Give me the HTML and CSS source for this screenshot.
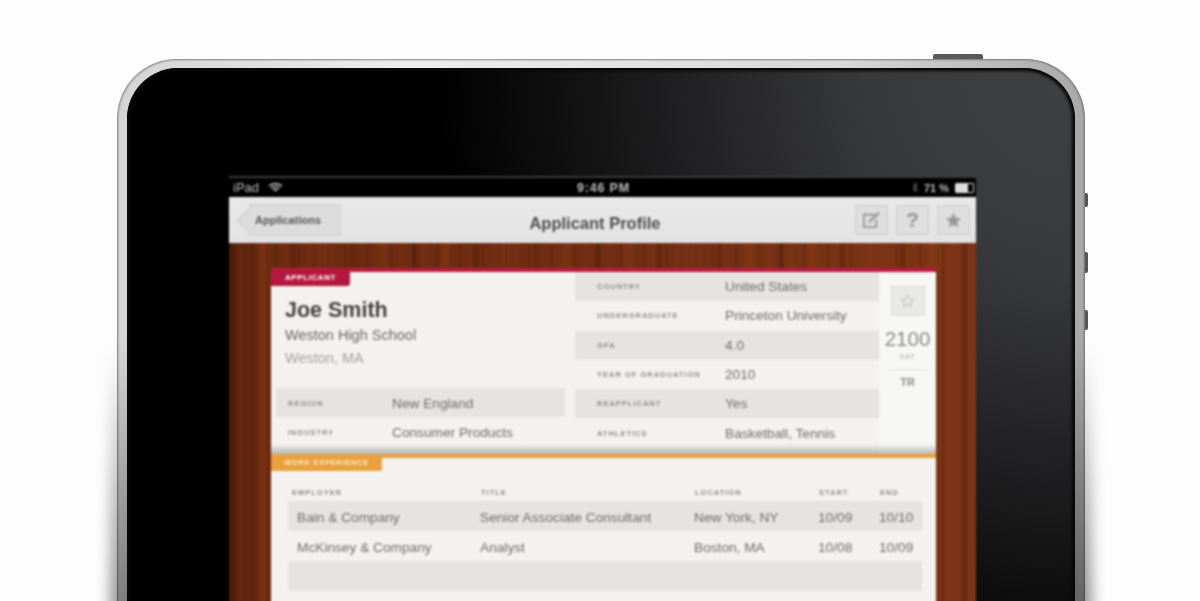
FILE: index.html
```html
<!DOCTYPE html>
<html lang="en">
<head>
  <meta charset="utf-8"/>
  <title>Applicant Profile</title>
  <link rel="stylesheet" href="styles.css">
</head>
<body>
  <div class="ipad">
    <span class="btn-top"></span>
    <span class="btn-side btn-lock"></span>
    <span class="btn-side btn-vol"></span>
    <span class="btn-side btn-vol2"></span>
    <div class="bezel">
      <div class="screen">

        <!-- status bar -->
        <div class="status">
          <div class="status-left">
            <span>iPad</span>
            <svg width="15" height="11" viewBox="0 0 15 11" fill="none" stroke="#ccc" stroke-width="1.5"><path d="M1 4c3.5-3 9.500-3 13 0M3.300 6.300c2.400-2 6-2 8.400 0M5.600 8.400c1-.8 2.800-.8 3.800 0"/></svg>
          </div>
          <div class="status-time">9:46 PM</div>
          <div class="status-right">
            <svg width="6" height="11" viewBox="0 0 6 11" fill="none" stroke="#666" stroke-width="1"><path d="M1 3l4 5-2 2V1l2 2-4 5"/></svg>
            <span>71 %</span>
            <span class="battery"><span class="battery-fill"></span></span>
          </div>
        </div>

        <!-- nav bar -->
        <div class="navbar">
          <a class="back"><span class="back-text">Applications</span></a>
          <div class="nav-title">Applicant Profile</div>
          <div class="nav-actions">
            <span class="nav-btn">
              <svg width="21" height="19" viewBox="0 0 22 20" fill="none" stroke="#999" stroke-width="2"><path d="M15 4H3v13h13V9"/><path d="M8 12l11-10" stroke-width="2.4"/></svg>
            </span>
            <span class="nav-btn nav-help">?</span>
            <span class="nav-btn">
              <svg width="17" height="16" viewBox="0 0 20 19" fill="#999"><path d="M10 1l2.700 5.900 6.300.7-4.700 4.300 1.300 6.300L10 15.100l-5.600 3.100 1.300-6.300L1 7.600l6.300-.7z"/></svg>
            </span>
          </div>
        </div>

        <div class="wood">
          <div class="card">

            <section class="applicant">
              <span class="tag tag-red">APPLICANT</span>
              <div class="applicant-body">
                <div class="col-left">
                  <div class="who">
                    <h1>Joe Smith</h1>
                    <p class="school">Weston High School</p>
                    <p class="town">Weston, MA</p>
                  </div>
                  <div class="row shaded"><span class="lbl">REGION</span><span class="val">New England</span></div>
                  <div class="row"><span class="lbl">INDUSTRY</span><span class="val">Consumer Products</span></div>
                </div>
                <div class="col-mid">
                  <div class="row shaded"><span class="lbl">COUNTRY</span><span class="val">United States</span></div>
                  <div class="row"><span class="lbl">UNDERGRADUATE</span><span class="val">Princeton University</span></div>
                  <div class="row shaded"><span class="lbl">GPA</span><span class="val">4.0</span></div>
                  <div class="row"><span class="lbl">YEAR OF GRADUATION</span><span class="val">2010</span></div>
                  <div class="row shaded"><span class="lbl">REAPPLICANT</span><span class="val">Yes</span></div>
                  <div class="row"><span class="lbl">ATHLETICS</span><span class="val">Basketball, Tennis</span></div>
                </div>
                <div class="col-score">
                  <span class="star-btn">
                    <svg width="15" height="14" viewBox="0 0 20 19" fill="none" stroke="#c4c4c0" stroke-width="1.4"><path d="M10 1.500l2.500 5.400 5.800.7-4.300 4 1.200 5.800L10 14.500l-5.200 2.900L6 11.600l-4.300-4 5.800-.7z"/></svg>
                  </span>
                  <div class="score">2100</div>
                  <div class="score-lbl">SAT</div>
                  <div class="score-tr">TR</div>
                </div>
              </div>
            </section>

            <section class="work">
              <span class="tag tag-orange">WORK EXPERIENCE</span>
              <div class="work-table">
                <div class="work-head">
                  <span class="c1">EMPLOYER</span><span class="c2">TITLE</span><span class="c3">LOCATION</span><span class="c4">START</span><span class="c5">END</span>
                </div>
                <div class="work-row shaded">
                  <span class="c1">Bain &amp; Company</span><span class="c2">Senior Associate Consultant</span><span class="c3">New York, NY</span><span class="c4">10/09</span><span class="c5">10/10</span>
                </div>
                <div class="work-row">
                  <span class="c1">McKinsey &amp; Company</span><span class="c2">Analyst</span><span class="c3">Boston, MA</span><span class="c4">10/08</span><span class="c5">10/09</span>
                </div>
                <div class="work-row shaded"></div>
              </div>
            </section>

          </div>
        </div>
      </div>
    </div>
  </div>
</body>
</html>
```

FILE: styles.css
```css
html, body {
  margin: 0;
  height: 601px;
  overflow: hidden;
}
body {
  font-family: "Liberation Sans", Arial, sans-serif;
  background: #fdfdfd;
  padding-top: 59px;
  box-sizing: border-box;
}

/* device */
.ipad {
  position: relative;
  z-index: 0;
  width: 968px;
  height: 560px;
  margin-left: 117px;
  box-sizing: border-box;
  padding: 9px 10px 0 10px;
  border-radius: 60px 60px 0 0;
  background: linear-gradient(90deg, #d4d4d4 0, #eeeeee 30%, #d8d8d8 75%, #a8a8a8 100%);
  box-shadow: inset 0 0 2px 1px rgba(90,90,90,0.7);
}
.ipad:before {
  content: "";
  position: absolute;
  z-index: -1;
  left: -7px;
  right: -7px;
  top: 285px;
  height: 320px;
  background: linear-gradient(rgba(0,0,0,0), rgba(0,0,0,0.25) 45%, rgba(0,0,0,0.5));
  filter: blur(7px);
}
.bezel {
  height: 100%;
  box-sizing: border-box;
  padding: 108px 99px 0 102px;
  border-radius: 51px 51px 0 0;
  box-shadow: inset 0 0 3px 3px #080808;
  background:
    radial-gradient(ellipse 640px 640px at 100% 0, #3f4042 0, #38393b 32%, #262628 55%, #121213 78%, #000 100%);
}
.btn-top {
  position: absolute;
  top: -5px;
  left: 816px;
  width: 50px;
  height: 5px;
  border-radius: 2px 2px 0 0;
  background: #5a5a5a;
}
.btn-side {
  position: absolute;
  right: -3px;
  width: 3px;
  background: #555;
  border-radius: 0 2px 2px 0;
}
.btn-lock { top: 134px; height: 14px; }
.btn-vol { top: 193px; height: 21px; }
.btn-vol2 { top: 251px; height: 20px; }

/* screen */
.screen {
  filter: blur(0.8px);
  width: 747px;
}
.status {
  height: 19px;
  background: #000;
  border-top: 2px solid #3a3a3a;
  display: flex;
  align-items: center;
  justify-content: space-between;
  color: #bdbdbd;
  font-size: 13px;
  padding: 0 2px 0 4px;
}
.status-left, .status-right {
  display: flex;
  align-items: center;
  gap: 6px;
  width: 200px;
}
.status-left {
  gap: 9px;
}
.status-right {
  justify-content: flex-end;
  font-size: 11px;
  font-weight: bold;
}
.status-time {
  font-weight: bold;
  font-size: 12.5px;
  letter-spacing: 0.8px;
}
.battery {
  width: 17px;
  height: 8px;
  border: 1px solid #ddd;
  border-radius: 1px;
  display: block;
}
.battery-fill {
  display: block;
  width: 12px;
  height: 8px;
  background: #ddd;
}
.navbar {
  height: 46px;
  background: linear-gradient(#e9e9e9, #e3e3e3);
  display: flex;
  align-items: center;
  position: relative;
  box-sizing: border-box;
  padding: 0 6px 0 20px;
  justify-content: space-between;
}
.back {
  height: 32px;
  width: 92px;
  background: #dcdcdc;
  border: 1px solid #cfcfcf;
  border-left: 0;
  border-radius: 0 3px 3px 0;
  position: relative;
  box-sizing: border-box;
  font-size: 11px;
  font-weight: bold;
  color: #555;
  line-height: 30px;
  padding-left: 6px;
}
.back:before {
  content: "";
  position: absolute;
  left: -8px;
  top: 4px;
  width: 22px;
  height: 22px;
  background: #dcdcdc;
  border-left: 1px solid #cfcfcf;
  border-bottom: 1px solid #cfcfcf;
  transform: rotate(45deg);
}
.back-text {
  position: relative;
}
.nav-title {
  position: absolute;
  left: 0;
  right: 15px;
  padding-top: 7px;
  text-align: center;
  font-size: 16.5px;
  font-weight: bold;
  color: #4c4c4c;
}
.nav-actions {
  display: flex;
  gap: 8px;
}
.nav-btn {
  width: 33px;
  height: 30px;
  box-sizing: border-box;
  background: #dedede;
  border: 1px solid #cdcdcd;
  display: flex;
  align-items: center;
  justify-content: center;
  border-radius: 2px;
}
.nav-help {
  font-size: 21px;
  font-weight: bold;
  color: #999;
}

/* wood background */
.wood {
  height: 360px;
  padding: 25px 40px 0 42px;
  background:
    repeating-linear-gradient(90deg, rgba(40,10,0,0.16) 0 2px, rgba(0,0,0,0) 2px 9px, rgba(150,65,25,0.12) 9px 13px, rgba(0,0,0,0) 13px 23px),
    repeating-linear-gradient(90deg, rgba(50,15,0,0.2) 0 6px, rgba(0,0,0,0) 6px 29px, rgba(160,70,25,0.18) 29px 37px, rgba(0,0,0,0) 37px 61px),
    linear-gradient(90deg, #57200e 0, #6b2b10 5%, #702d13 50%, #7c3416 100%);
}
.card {
  background: #f3f2ef;
  height: 340px;
}
.tag {
  display: block;
  position: absolute;
  left: 0;
  color: #fff;
  font-weight: bold;
  text-align: center;
  box-sizing: border-box;
}
.tag-red {
  top: -3px;
  width: 79px;
  height: 17px;
  line-height: 17px;
  font-size: 8px;
  letter-spacing: 0.6px;
  background: #b5173f;
  border-radius: 0 0 3px 0;
}
.tag-orange {
  top: -2px;
  width: 111px;
  height: 15px;
  line-height: 14px;
  font-size: 7.5px;
  letter-spacing: 0.7px;
  color: #fbe6c8;
  background: #e9a13f;
  border-radius: 0 0 2px 0;
}
.applicant {
  position: relative;
  border-top: 4px solid #bd1a42;
}
.applicant-body {
  display: flex;
  height: 182px;
  position: relative;
}
.applicant-body:after {
  content: "";
  position: absolute;
  left: 0;
  right: 0;
  bottom: 0;
  height: 10px;
  background: linear-gradient(rgba(150,150,145,0), rgba(150,150,145,0.65));
}
.col-left {
  width: 294px;
}
.who {
  height: 116px;
  box-sizing: border-box;
  padding: 25px 0 0 14px;
}
.who h1 {
  margin: 0;
  font-size: 21.5px;
  line-height: 26px;
  color: #444;
}
.who p {
  margin: 0;
  font-size: 14.5px;
  line-height: 23px;
}
.school {
  padding-top: 1px;
  color: #666;
}
.town {
  color: #a3a3a0;
}
.col-mid {
  width: 304px;
  margin-left: 10px;
}
.row {
  height: 29.3px;
  box-sizing: border-box;
  display: flex;
  align-items: center;
  font-size: 13.7px;
  color: #6c6c6a;
}
.shaded {
  background: #e6e4e0;
}
.col-left .row {
  margin-left: 5px;
  padding: 2px 0 0 12px;
}
.col-mid .row {
  padding-left: 22px;
}
.lbl {
  font-size: 7.5px;
  letter-spacing: 1px;
  font-weight: bold;
  color: #8d8d8a;
}
.col-left .lbl {
  width: 104px;
}
.col-mid .lbl {
  width: 128px;
}
.col-score {
  flex: 1;
  background: #f7f7f5;
  display: flex;
  flex-direction: column;
  align-items: center;
  padding-top: 14px;
  color: #8c8c8a;
}
.star-btn {
  width: 34px;
  height: 30px;
  box-sizing: border-box;
  background: #e9e9e6;
  border: 1px solid #dcdcd8;
  display: flex;
  align-items: center;
  justify-content: center;
}
.score {
  font-size: 20.5px;
  line-height: 24px;
  margin-top: 11px;
}
.score-lbl {
  font-size: 7.5px;
  letter-spacing: 0.6px;
  color: #aaa;
  line-height: 11px;
  padding-bottom: 7px;
  border-bottom: 1px solid #e4e4e1;
  width: 40px;
  text-align: center;
}
.score-tr {
  font-size: 11px;
  font-weight: bold;
  margin-top: 6px;
}
.work {
  position: relative;
  border-top: 4px solid #e9a13f;
}
.work-table {
  padding: 27px 14px 0 17px;
}
.work-head, .work-row {
  display: flex;
}
.work-head {
  height: 16px;
  box-sizing: border-box;
  padding: 0 0 2px 4px;
  font-size: 7.5px;
  letter-spacing: 1px;
  font-weight: bold;
  color: #8d8d8a;
  align-items: center;
}
.work-row {
  height: 30px;
  box-sizing: border-box;
  padding: 2px 0 0 9px;
  align-items: center;
  font-size: 13.7px;
  color: #6c6c6a;
}
.work-head .c1 { width: 189px; }
.work-row .c1 { width: 183px; }
.c2 { width: 214px; }
.c3 { width: 124px; }
.c4 { width: 61px; }
.c5 { width: 42px; }
```
